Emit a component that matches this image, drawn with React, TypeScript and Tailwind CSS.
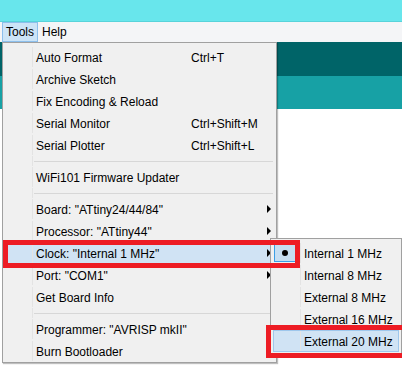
type Row =
  | { kind: "sep" }
  | { kind: "item"; label: string; shortcut?: string; arrow?: boolean; active?: boolean };

const toolsMenu: Row[] = [
  { kind: "item", label: "Auto Format", shortcut: "Ctrl+T" },
  { kind: "item", label: "Archive Sketch" },
  { kind: "item", label: "Fix Encoding & Reload" },
  { kind: "item", label: "Serial Monitor", shortcut: "Ctrl+Shift+M" },
  { kind: "item", label: "Serial Plotter", shortcut: "Ctrl+Shift+L" },
  { kind: "sep" },
  { kind: "item", label: "WiFi101 Firmware Updater" },
  { kind: "sep" },
  { kind: "item", label: 'Board: "ATtiny24/44/84"', arrow: true },
  { kind: "item", label: 'Processor: "ATtiny44"', arrow: true },
  { kind: "item", label: 'Clock: "Internal 1 MHz"', arrow: true, active: true },
  { kind: "item", label: 'Port: "COM1"', arrow: true },
  { kind: "item", label: "Get Board Info" },
  { kind: "sep" },
  { kind: "item", label: 'Programmer: "AVRISP mkII"', arrow: true },
  { kind: "item", label: "Burn Bootloader" },
];

const clockOptions = [
  "Internal 1 MHz",
  "Internal 8 MHz",
  "External 8 MHz",
  "External 16 MHz",
  "External 20 MHz",
];

function Gutter({ children }: { children?: React.ReactNode }) {
  return (
    <div className="flex h-full w-[27px] shrink-0 items-center justify-start border-r border-[#e3e3e3]">
      {children}
    </div>
  );
}

function Arrow() {
  return (
    <span className="ml-auto mr-[2px] h-0 w-0 border-y-[4px] border-l-[4px] border-y-transparent border-l-black" />
  );
}

function MenuRow({ row }: { row: Row }) {
  if (row.kind === "sep") {
    return (
      <div className="flex h-[10px] items-center">
        <div className="h-full w-[28px] shrink-0 border-r border-[#e3e3e3]" />
        <div className="ml-[1px] mr-[1px] h-px flex-1 bg-[#d7d7d7]" />
      </div>
    );
  }
  return (
    <div
      className={`flex h-[22px] items-center border ${
        row.active ? "border-[#9ec7ec] bg-[#d0e3f4]" : "border-transparent"
      }`}
    >
      <Gutter />
      <span className="w-[158px] shrink-0 whitespace-nowrap pl-[3px] pt-[1px]">{row.label}</span>
      {row.shortcut ? <span className="whitespace-nowrap pt-[1px]">{row.shortcut}</span> : null}
      {row.arrow ? <Arrow /> : null}
    </div>
  );
}

export default function App() {
  return (
    <div className="relative flex h-[366px] w-[402px] flex-col overflow-hidden bg-white font-['Liberation_Sans',Arial,sans-serif] text-[12px] leading-none text-black">
      {/* window title area */}
      <div className="h-[22px] shrink-0 border-b border-[#58d3da] bg-[#68e6ec]" />

      {/* menu bar */}
      <div className="flex h-[20px] shrink-0 items-stretch bg-[#f4f5f7] pl-[2px]">
        <div className="flex items-center border border-[#8dbfec] bg-[#cce4f7] pl-[3px] pr-[3px]">
          Tools
        </div>
        <div className="flex items-center pl-[4px]">Help</div>
      </div>

      {/* editor behind the menu */}
      <div className="h-[34px] shrink-0 bg-[#006468]" />
      <div className="h-[33px] shrink-0 bg-[#17a1a5]" />
      <div className="flex-1 bg-white" />

      {/* Tools dropdown */}
      <div className="absolute left-[2px] top-[42px] w-[275px] border border-[#a0a0a0] bg-[#f0f0f0] px-[2px] pt-[3px] shadow-[1px_1px_1px_rgba(0,0,0,0.25)]">
        {toolsMenu.map((row, i) => (
          <MenuRow key={i} row={row} />
        ))}
      </div>

      {/* Clock submenu */}
      <div className="absolute left-[270px] top-[238px] w-[132px] border border-[#a0a0a0] bg-[#f0f0f0] px-[2px] py-[3px]">
        {clockOptions.map((opt, i) => {
          const checked = i === 0;
          const active = i === clockOptions.length - 1;
          return (
            <div
              key={opt}
              className={`flex h-[22px] items-center border ${
                active ? "border-[#9ec7ec] bg-[#d0e3f4]" : "border-transparent"
              }`}
            >
              <Gutter>
                {checked ? (
                  <div className="flex h-[18px] w-[22px] items-center justify-center border border-[#3c9ee5] bg-[#c6def1]">
                    <span className="h-[6px] w-[6px] rounded-full bg-black" />
                  </div>
                ) : null}
              </Gutter>
              <span className="whitespace-nowrap pl-[3px] pt-[1px]">{opt}</span>
            </div>
          );
        })}
      </div>

      {/* red annotation boxes */}
      <div className="absolute left-[3px] top-[240px] h-[28px] w-[297px] border-[5px] border-[#ed1c24]" />
      <div className="absolute left-[266px] top-[325px] h-[33px] w-[150px] border-[5px] border-[#ed1c24]" />
    </div>
  );
}
